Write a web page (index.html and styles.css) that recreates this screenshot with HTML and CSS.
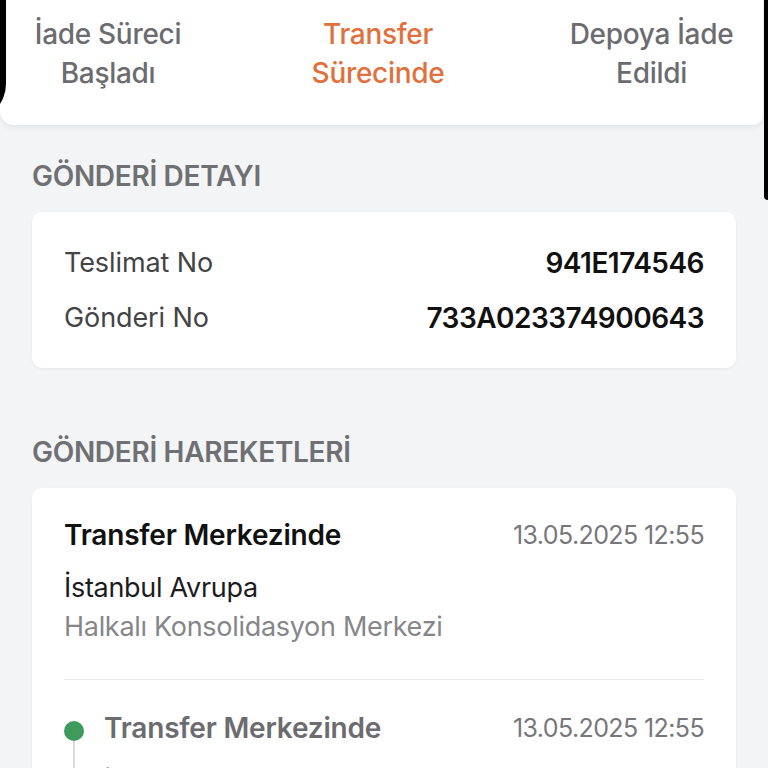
FILE: index.html
```html
<!DOCTYPE html>
<html lang="tr">
<head>
<meta charset="utf-8">
<link rel="stylesheet" href="styles.css">
</head>
<body>
<div class="screen">
  <header class="steps">
    <div class="step">İade Süreci<br>Başladı</div>
    <div class="step active">Transfer<br>Sürecinde</div>
    <div class="step">Depoya İade<br>Edildi</div>
  </header>

  <h2 class="section-title first">GÖNDERİ DETAYI</h2>
  <section class="card detail">
    <div class="row"><span class="label">Teslimat No</span><span class="value">941E174546</span></div>
    <div class="row"><span class="label">Gönderi No</span><span class="value">733A023374900643</span></div>
  </section>

  <h2 class="section-title second">GÖNDERİ HAREKETLERİ</h2>
  <section class="card moves">
    <div class="current">
      <div class="line-head"><span class="status">Transfer Merkezinde</span><span class="date">13.05.2025 12:55</span></div>
      <div class="city">İstanbul Avrupa</div>
      <div class="place">Halkalı Konsolidasyon Merkezi</div>
    </div>
    <div class="divider"></div>
    <div class="timeline">
      <div class="t-item">
        <div class="t-rail"><span class="dot"></span><span class="rail"></span></div>
        <div class="t-body">
          <div class="line-head"><span class="status muted">Transfer Merkezinde</span><span class="date">13.05.2025 12:55</span></div>
          <div class="city muted-city">İstanbul Avrupa</div>
        </div>
      </div>
    </div>
  </section>
  <div class="bezel-left"></div>
  <div class="bezel-right"></div>
</div>
</body>
</html>
```

FILE: styles.css
```css
html, body {
  margin: 0;
  padding: 0;
  background: #f3f4f5;
}
body {
  font-family: Inter, "Noto Sans", "Liberation Sans", sans-serif;
  width: 768px;
  height: 768px;
  overflow: hidden;
}
.screen {
  position: relative;
  width: 768px;
  height: 768px;
  overflow: hidden;
}
.steps {
  display: flex;
  background: #fff;
  width: 763px;
  height: 125px;
  box-sizing: border-box;
  padding: 15px 0 0 0;
  border-radius: 0 0 10px 14px;
  box-shadow: 0 2px 6px rgba(0,0,0,0.07);
}
.step {
  font-size: 28px;
  font-weight: 500;
  line-height: 39px;
  color: #6c6c70;
  text-align: center;
  letter-spacing: -0.3px;
  white-space: nowrap;
  flex: none;
}
.step:nth-child(1) { width: 216px; }
.step:nth-child(2) { width: 324px; }
.step:nth-child(3) { width: 223px; }
.step.active { color: #e0703c; }

.section-title {
  margin: 0;
  padding: 36px 32px 0;
  font-size: 28px;
  font-weight: 600;
  color: #6f7073;
  letter-spacing: -0.3px;
  line-height: 30px;
}
.section-title.second { padding-top: 69px; }

.card {
  margin: 21px 32px 0;
  background: #fff;
  border-radius: 10px;
  box-shadow: 0 1px 3px rgba(0,0,0,0.06);
}
.detail {
  padding: 35px 32px 34px;
  display: flex;
  flex-direction: column;
  gap: 23px;
}
.row {
  display: flex;
  justify-content: space-between;
  align-items: center;
  line-height: 32px;
}
.label {
  font-size: 27px;
  color: #444446;
  letter-spacing: -0.1px;
}
.value {
  font-size: 28px;
  font-weight: 600;
  color: #111;
  letter-spacing: -0.5px;
}
.moves {
  padding: 30px 32px 0;
  height: 400px;
}
.line-head {
  display: flex;
  justify-content: space-between;
  align-items: center;
  line-height: 34px;
}
.status {
  font-size: 28px;
  font-weight: 600;
  color: #111;
  letter-spacing: -0.2px;
}
.status.muted { color: #6c6c70; }
.date {
  font-size: 25px;
  color: #77777b;
  letter-spacing: -0.6px;
}
.city {
  margin-top: 19px;
  font-size: 27px;
  color: #1c1c1e;
  line-height: 34px;
  letter-spacing: -0.3px;
}
.place {
  margin-top: 5px;
  font-size: 27px;
  color: #86868a;
  line-height: 34px;
  letter-spacing: -0.3px;
}
.divider {
  margin-top: 35px;
  height: 1px;
  background: #ececee;
}
.timeline {
  padding-top: 31px;
}
.t-item {
  display: flex;
  gap: 21px;
}
.t-rail {
  display: flex;
  flex-direction: column;
  align-items: center;
  width: 19px;
  padding-top: 10px;
}
.dot {
  width: 20px;
  height: 20px;
  border-radius: 50%;
  background: #3f9b5c;
  flex: none;
}
.rail {
  width: 2px;
  height: 60px;
  background: #dcdcde;
}
.t-body { flex: 1; }
.muted-city { margin-top: 22px; }

.bezel-left {
  position: absolute;
  left: -30px;
  top: -20px;
  width: 36px;
  height: 140px;
  background: #000;
  border-radius: 0 0 40px 0;
}
.bezel-right {
  position: absolute;
  right: 0;
  top: 0;
  width: 4px;
  height: 200px;
  background: #000;
  border-radius: 0 0 0 4px;
}
```
